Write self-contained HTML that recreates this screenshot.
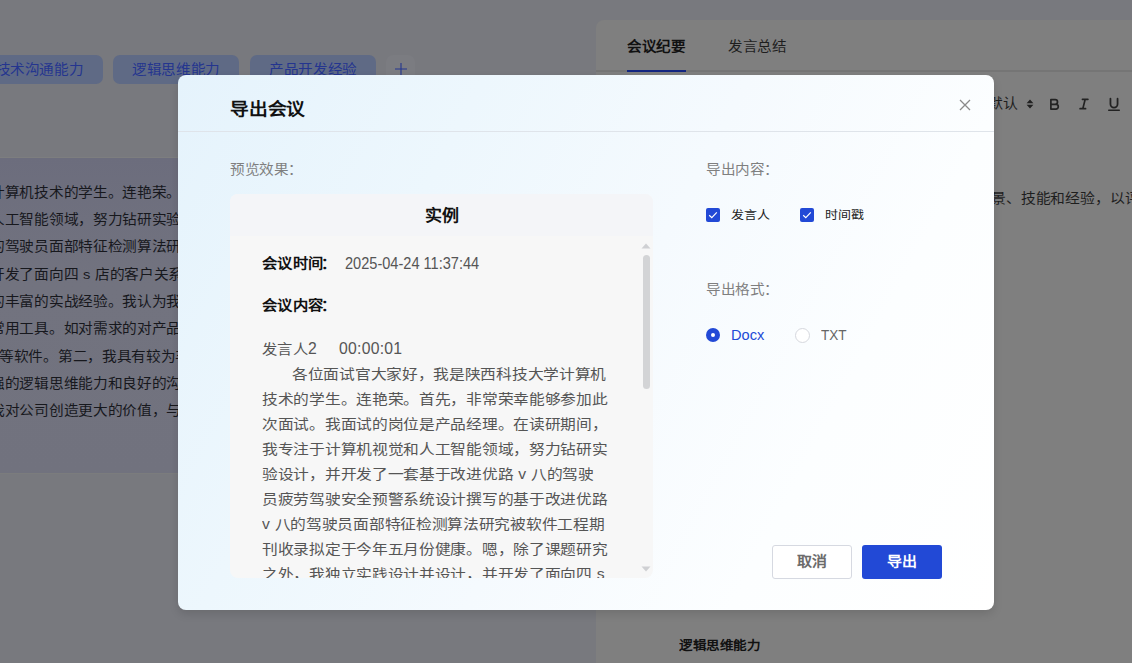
<!DOCTYPE html>
<html lang="zh-CN"><head><meta charset="utf-8">
<style>
*{margin:0;padding:0;box-sizing:border-box}
html,body{width:1132px;height:663px;overflow:hidden}
body{font-family:"Liberation Sans",sans-serif;background:#78797e;position:relative;color:#000}
.a{position:absolute;white-space:nowrap}
.sq{transform:scaleY(0.9)}
.tag{position:absolute;top:55px;height:29px;border-radius:7px;background:#5f6a85}
.tagt{position:absolute;top:55px;height:29px;color:#24358f;font-size:14.6px;letter-spacing:-0.4px;line-height:31px;text-align:center;white-space:nowrap;transform:scaleY(0.9)}
.lpanel{position:absolute;left:0;top:157px;width:580px;height:317px;background:linear-gradient(180deg,#6c6d7d 0%,#72737f 40%,#71727e 100%);border-top:1px solid #7d7e7f;border-bottom:1px solid #7b7c7d}
.ln{position:absolute;left:-10px;font-size:14.7px;letter-spacing:-0.3px;word-spacing:1px;line-height:20px;color:#17181d;white-space:nowrap;transform:scaleY(0.9)}
.rpanel{position:absolute;left:596px;top:20px;width:560px;height:700px;background:#7f7f7f;border-radius:8px 0 0 0}
.modal{position:absolute;left:178px;top:75px;width:816px;height:535px;border-radius:8px;overflow:hidden;
 background:linear-gradient(118deg,#e5f3fc 0%,#edf7fd 28%,#f5fafe 52%,#fcfeff 76%,#ffffff 100%);box-shadow:0 4px 10px rgba(0,0,0,.12)}
.lbl{position:absolute;font-size:14.6px;letter-spacing:-0.4px;line-height:20px;color:#7f7f7f;white-space:nowrap;transform:scaleY(0.9)}
.preview{position:absolute;left:52px;top:119px;width:423px;height:384px;background:#f7f7f7;border-radius:8px;overflow:hidden}
.phead{position:absolute;left:0;top:0;width:100%;height:42px;background:#f4f5f8}
.pht{position:absolute;left:0;top:0;width:100%;height:42px;text-align:center;font-size:17px;font-weight:bold;line-height:46px;color:#111;transform:scaleY(0.92)}
.pc{position:absolute;left:32px;font-size:15.3px;letter-spacing:0.3px;line-height:20px;color:#555;white-space:nowrap}
.pb{font-weight:bold;color:#111;transform:scaleY(0.88)}
.para{position:absolute;left:32px;top:168px;font-size:15.75px;letter-spacing:-0.3px;word-spacing:1px;line-height:25px;color:#555;white-space:nowrap}
.para div{transform:scaleY(0.9)}
.cb{position:absolute;width:14px;height:14px;background:#2249d6;border-radius:2px}
.btn{position:absolute;top:470px;width:80px;height:34px;border-radius:3px}
.btnt{position:absolute;top:470px;width:80px;height:34px;font-size:15px;text-align:center;line-height:32px;transform:scaleY(0.9)}
</style></head><body>
<div class="tag" style="left:-24px;width:127px"></div>
<div class="tag" style="left:113px;width:126px"></div>
<div class="tag" style="left:250px;width:126px"></div>
<div class="tag" style="left:386px;width:29px;background:#7b7c81"></div>
<div class="tagt" style="left:-24px;width:127px">技术沟通能力</div>
<div class="tagt" style="left:113px;width:126px">逻辑思维能力</div>
<div class="tagt" style="left:250px;width:126px">产品开发经验</div>
<svg class="a" style="left:394px;top:62px" width="14" height="14" viewBox="0 0 14 14"><path d="M7 1V13M1 7H13" stroke="#24358f" stroke-width="1.1"/></svg>

<div class="lpanel">
 <div class="ln" style="top:24px">计算机技术的学生。连艳荣。</div>
 <div class="ln" style="top:51px">人工智能领域，努力钻研实验</div>
 <div class="ln" style="top:78px">的驾驶员面部特征检测算法研</div>
 <div class="ln" style="top:106px">开发了面向四 s 店的客户关系</div>
 <div class="ln" style="top:133px">的丰富的实战经验。我认为我</div>
 <div class="ln" style="top:160px">常用工具。如对需求的对产品</div>
 <div class="ln" style="top:188px;left:-1px">等软件。第二，我具有较为丰</div>
 <div class="ln" style="top:215px">强的逻辑思维能力和良好的沟</div>
 <div class="ln" style="top:242px">我对公司创造更大的价值，与</div>
</div>

<div class="rpanel">
 <div class="a sq" style="left:31px;top:16px;font-size:14.55px;letter-spacing:-0.45px;line-height:20px;font-weight:bold;color:#111">会议纪要</div>
 <div class="a sq" style="left:132px;top:16px;font-size:14.55px;letter-spacing:-0.45px;line-height:20px;color:#1e1e1e">发言总结</div>
 <div style="position:absolute;left:0;top:50px;width:560px;height:2px;background:#757575"></div>
 <div style="position:absolute;left:31px;top:50px;width:59px;height:2px;background:#132681"></div>
 <div class="a sq" style="left:392px;top:73px;font-size:14.85px;letter-spacing:-0.15px;line-height:20px;color:#1e1e1e">默认</div>
 <svg class="a" style="left:430px;top:79px" width="8" height="10" viewBox="0 0 8 10"><path d="M0.6 4.2L4 0.4L7.4 4.2Z M0.6 5.8L4 9.6L7.4 5.8Z" fill="#222"/></svg>
 <svg class="a" style="left:451px;top:77px" width="14" height="14" viewBox="0 0 18 18"><path d="M5 3.5H10.5A3 3 0 0 1 10.5 9.5H5Z M5 9.5H11.5A3 3 0 0 1 11.5 15.5H5Z" fill="none" stroke="#222" stroke-width="2.2" stroke-linejoin="round"/></svg>
 <svg class="a" style="left:481px;top:77px" width="14" height="14" viewBox="0 0 18 18"><path d="M7 3H14M4 15H11M10.5 3L7.5 15" fill="none" stroke="#222" stroke-width="2.2" stroke-linecap="round"/></svg>
 <svg class="a" style="left:510px;top:76px" width="16" height="16" viewBox="0 0 18 18"><path d="M5 3V9A4 4 0 0 0 13 9V3" fill="none" stroke="#222" stroke-width="2" stroke-linecap="round"/><path d="M3 16H15" stroke="#222" stroke-width="1.5" stroke-linecap="round"/></svg>
 <div class="a sq" style="left:395px;top:168px;font-size:14.85px;letter-spacing:-0.15px;line-height:20px;color:#1e1e1e">景、技能和经验，以评</div>
 <div class="a sq" style="left:83px;top:616px;font-size:13.56px;letter-spacing:-0.44px;line-height:20px;font-weight:bold;color:#111">逻辑思维能力</div>
</div>

<div class="modal">
 <div class="a" style="left:52px;top:22px;font-size:18.75px;letter-spacing:-0.25px;line-height:24px;font-weight:bold;color:#111;transform:scaleY(0.93)">导出会议</div>
 <svg class="a" style="left:781px;top:24px" width="12" height="12" viewBox="0 0 12 12"><path d="M1 1L11 11M11 1L1 11" stroke="#8a8a8a" stroke-width="1.3"/></svg>
 <div style="position:absolute;left:0;top:56px;width:816px;height:1px;background:#dfe4ea"></div>
 <div class="lbl" style="left:52px;top:84px">预览效果：</div>
 <div class="preview">
  <div class="phead"></div>
  <div class="pht">实例</div>
  <div class="pc pb" style="top:60px">会议时间<span style="margin-left:-2.5px">：</span></div>
  <div class="pc" style="top:60px;left:115px;font-size:16px;letter-spacing:0;transform:scaleX(0.91);transform-origin:0 0">2025-04-24 11:37:44</div>
  <div class="pc pb" style="top:102px">会议内容<span style="margin-left:-2.5px">：</span></div>
  <div class="pc" style="top:145px;transform:scaleY(0.9)">发言人</div>
  <div class="pc" style="top:145px;left:78px;font-size:15.75px;letter-spacing:0">2</div>
  <div class="pc" style="top:145px;left:109px;font-size:15.75px;letter-spacing:0.25px">00:00:01</div>
  <div class="para">
   <div style="padding-left:30px">各位面试官大家好，我是陕西科技大学计算机</div>
   <div>技术的学生。连艳荣。首先，非常荣幸能够参加此</div>
   <div>次面试。我面试的岗位是产品经理。在读研期间，</div>
   <div>我专注于计算机视觉和人工智能领域，努力钻研实</div>
   <div>验设计，并开发了一套基于改进优路 v 八的驾驶</div>
   <div>员疲劳驾驶安全预警系统设计撰写的基于改进优路</div>
   <div>v 八的驾驶员面部特征检测算法研究被软件工程期</div>
   <div>刊收录拟定于今年五月份健康。嗯，除了课题研究</div>
   <div>之外，我独立实践设计并设计，并开发了面向四 s</div>
  </div>
  <svg class="a" style="left:411px;top:49px" width="10" height="6" viewBox="0 0 10 6"><path d="M0.5 5.5L5 0.5L9.5 5.5Z" fill="#cfd0d3"/></svg>
  <div style="position:absolute;left:413px;top:61px;width:7px;height:134px;border-radius:4px;background:#d3d4d6"></div>
  <svg class="a" style="left:411px;top:372px" width="10" height="6" viewBox="0 0 10 6"><path d="M0.5 0.5L5 5.5L9.5 0.5Z" fill="#cfd0d3"/></svg>
 </div>
 <div class="lbl" style="left:528px;top:84px">导出内容：</div>
 <div class="cb" style="left:528px;top:133px"><svg width="14" height="14" viewBox="0 0 14 14"><path d="M3.2 7.2L5.8 9.6L10.8 4.4" fill="none" stroke="#fff" stroke-width="1.2"/></svg></div>
 <div class="a sq" style="left:553px;top:130px;font-size:13px;line-height:20px;color:#222">发言人</div>
 <div class="cb" style="left:622px;top:133px"><svg width="14" height="14" viewBox="0 0 14 14"><path d="M3.2 7.2L5.8 9.6L10.8 4.4" fill="none" stroke="#fff" stroke-width="1.2"/></svg></div>
 <div class="a sq" style="left:647px;top:130px;font-size:13px;line-height:20px;color:#222">时间戳</div>
 <div class="lbl" style="left:528px;top:204px">导出格式：</div>
 <div style="position:absolute;left:528px;top:253px;width:14px;height:14px;border-radius:50%;background:#2249d6"><div style="position:absolute;left:5px;top:5px;width:4px;height:4px;border-radius:50%;background:#fff"></div></div>
 <div class="a" style="left:553px;top:250px;font-size:14.6px;line-height:20px;color:#2249d6">Docx</div>
 <div style="position:absolute;left:617px;top:253px;width:15px;height:15px;border-radius:50%;background:#fff;border:1px solid #d6d8de"></div>
 <div class="a" style="left:643px;top:250px;font-size:14.6px;line-height:20px;color:#666;transform:scaleX(0.93);transform-origin:0 0">TXT</div>
 <div class="btn" style="left:594px;border:1px solid #d6d9e1;background:#fff"></div>
 <div class="btnt" style="left:594px;color:#6b6b6b;font-weight:bold">取消</div>
 <div class="btn" style="left:684px;background:#2249d6"></div>
 <div class="btnt" style="left:684px;color:#fff;font-weight:bold">导出</div>
</div>
</body></html>
